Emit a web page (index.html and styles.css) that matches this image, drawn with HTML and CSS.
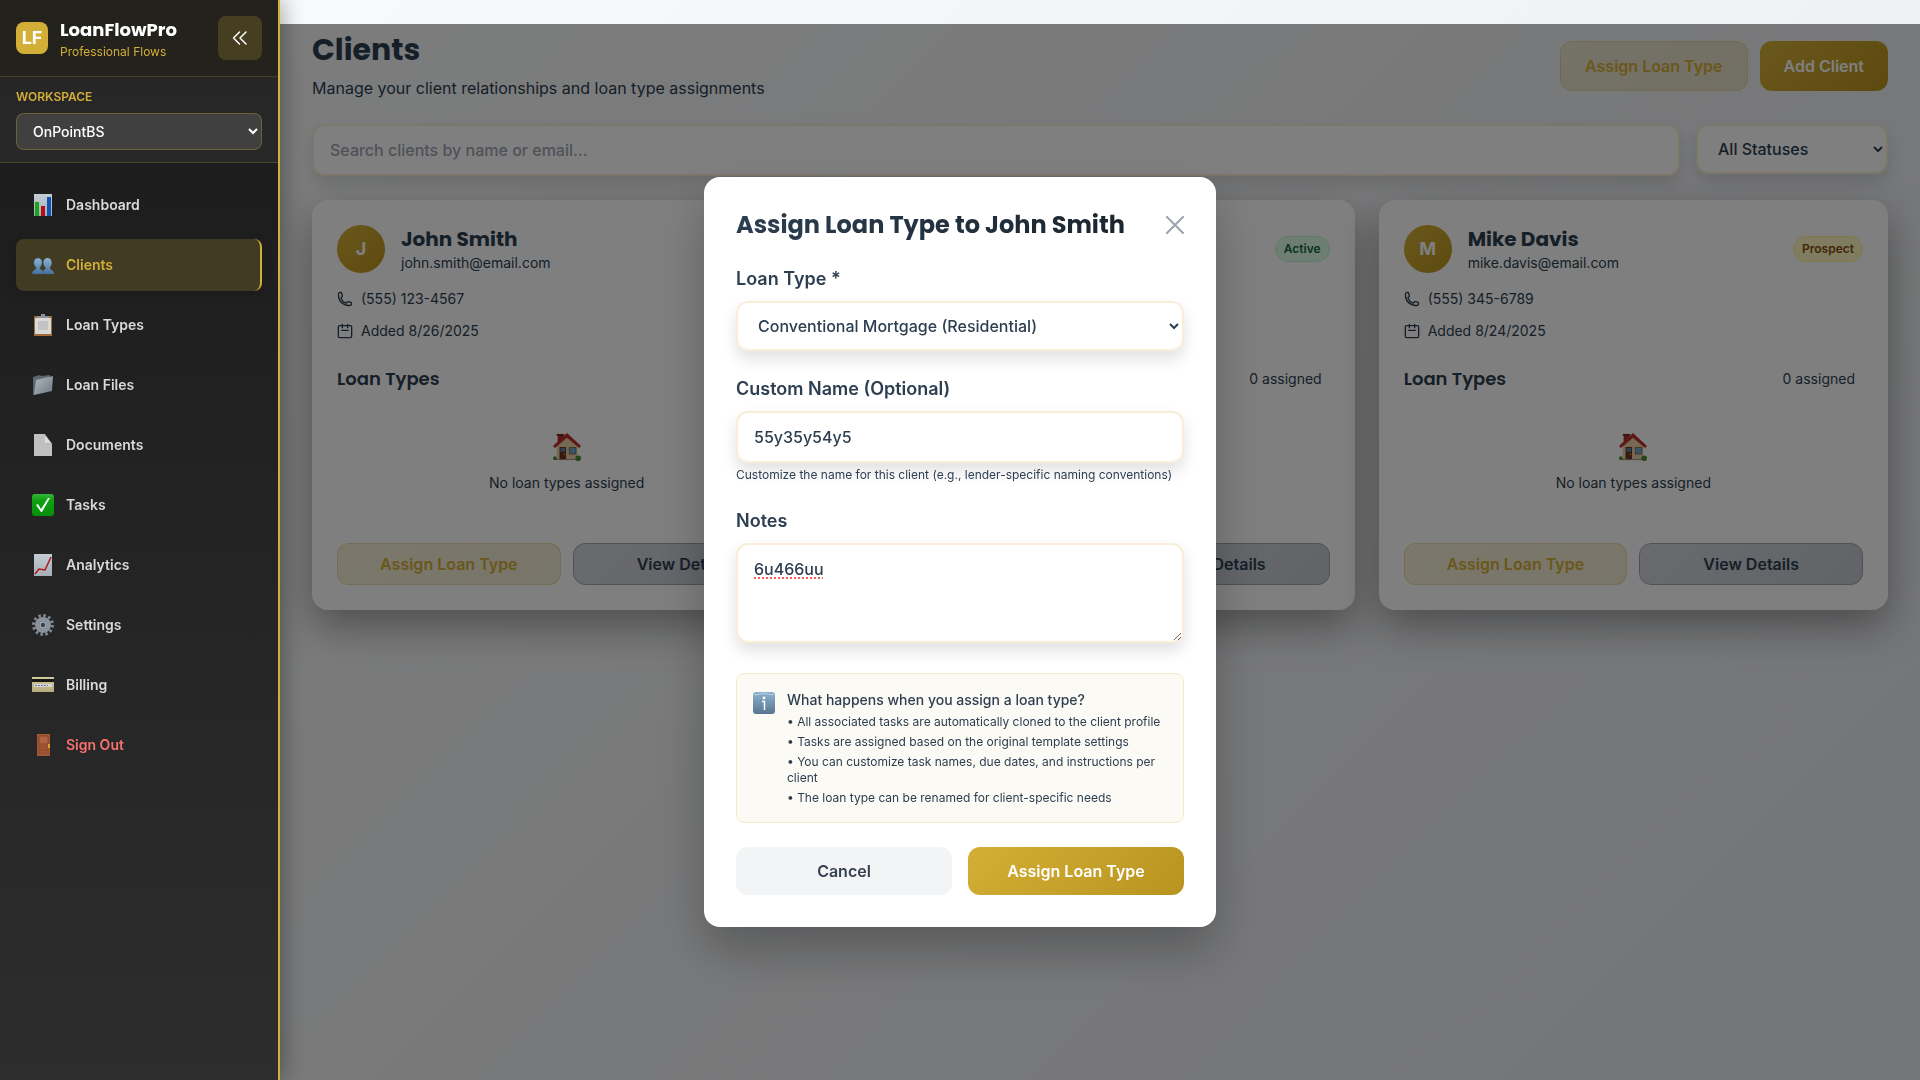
FILE: index.html
```html
<!DOCTYPE html>
<html lang="en">
<head>
<meta charset="utf-8">
<meta name="viewport" content="width=device-width, initial-scale=1">
<title>LoanFlowPro – Clients</title>
<link rel="stylesheet" href="styles.css">
</head>
<body>
<svg class="defs" aria-hidden="true">
  <defs>
    <linearGradient id="g-paper" x1="0" y1="0" x2="0" y2="1"><stop offset="0" stop-color="#c3ccd4"/><stop offset="1" stop-color="#a5afb7"/></linearGradient>
    <linearGradient id="g-green" x1="0" y1="0" x2="0" y2="1"><stop offset="0" stop-color="#35b83a"/><stop offset=".3" stop-color="#0d9f12"/><stop offset="1" stop-color="#078f0c"/></linearGradient>
    <linearGradient id="g-blue" x1="0" y1="0" x2="0" y2="1"><stop offset="0" stop-color="#8fb2cf"/><stop offset="1" stop-color="#587691"/></linearGradient>
    <linearGradient id="g-folder" x1="0" y1="0" x2="1" y2="1"><stop offset="0" stop-color="#b3bac1"/><stop offset="1" stop-color="#6f7881"/></linearGradient>
    <linearGradient id="g-user" x1="0" y1="0" x2="0" y2="1"><stop offset="0" stop-color="#8ab3d6"/><stop offset="1" stop-color="#48719a"/></linearGradient>
    <linearGradient id="g-card" x1="0" y1="0" x2="0" y2="1"><stop offset="0" stop-color="#d3caa0"/><stop offset="1" stop-color="#b5ab7c"/></linearGradient>
    <symbol id="house" viewBox="0 1 32 30">
      <path d="M3 28h26v2H3z" fill="#8d8474"/>
      <path d="M5 14 16 5l11 9v15H5z" fill="#ead3a8"/>
      <path d="M6 3h6v6l-6 5z" fill="#a9302a"/><path d="M5 2h8v2H5z" fill="#7a221e"/>
      <path d="M1 15 16 1l15 14-2 2L16 6 3 17z" fill="#b8302c"/>
      <path d="M8 16h7v13H8z" fill="#6d3520"/><path d="M9 17h5v4H9z" fill="#58809f"/><circle cx="13" cy="24" r=".8" fill="#e6b84a"/>
      <path d="M18 16h8v8h-8z" fill="#8b6b4c"/><path d="M19 17h6v6h-6z" fill="#71a9d8"/>
      <circle cx="3" cy="28" r="2" fill="#4a8f2e"/><circle cx="28" cy="28" r="3" fill="#4a8f2e"/>
    </symbol>
    <symbol id="phone" viewBox="0 0 24 24"><path fill="none" stroke="currentColor" stroke-width="2" stroke-linejoin="round" stroke-linecap="round" d="M2.250 6.750c0 8.284 6.716 15 15 15h2.250a2.250 2.250 0 0 0 2.250-2.250v-1.372c0-.516-.351-.966-.852-1.091l-4.423-1.106c-.44-.11-.902.055-1.173.417l-.97 1.293c-.282.376-.769.542-1.210.38a12.035 12.035 0 0 1-7.143-7.143c-.162-.441.004-.928.38-1.210l1.293-.97c.363-.271.527-.734.417-1.173L6.963 3.102a1.125 1.125 0 0 0-1.091-.852H4.500A2.250 2.250 0 0 0 2.250 4.500z"/></symbol>
    <symbol id="calendar" viewBox="0 0 24 24"><path fill="none" stroke="currentColor" stroke-width="2" stroke-linejoin="round" stroke-linecap="round" d="M8 2v5M16 2v5M7 11h10M4 4h16a2 2 0 0 1 2 2v14a2 2 0 0 1-2 2H4a2 2 0 0 1-2-2V6a2 2 0 0 1 2-2z"/></symbol>
  </defs>
</svg>

<div class="app">
  <aside class="sidebar">
    <header class="brand">
      <div class="brand-logo">LF</div>
      <div class="brand-text">
        <div class="brand-name">LoanFlowPro</div>
        <div class="brand-tag">Professional Flows</div>
      </div>
      <button class="collapse" type="button" aria-label="Collapse sidebar">
        <svg width="20" height="20" viewBox="0 0 20 20" fill="none" stroke="currentColor" stroke-width="1.500" stroke-linecap="round" stroke-linejoin="round"><path d="M9.500 4 3.500 10l6 6M16 4l-6 6 6 6"/></svg>
      </button>
    </header>
    <div class="workspace">
      <label for="workspace">WORKSPACE</label>
      <select id="workspace"><option>OnPointBS</option></select>
    </div>
    <nav class="nav">
      <a href="#"><svg viewBox="0 0 22 22"><path d="M2 0h18v22H2z" fill="url(#g-paper)"/><path d="M3 8h4v14H3z" fill="#14a51a"/><path d="M9 12h4v10H9z" fill="#b50d12"/><path d="M15 3h4v19h-4z" fill="#0d55b5"/></svg>Dashboard</a>
      <a href="#" class="active" aria-current="page"><svg viewBox="0 0 22 22"><path d="M10 20c0-3 2-4 3.500-5v-1.500C10 10 11 4 15.500 4S21 10 18 13.500V15c2 .7 4 2 4 5z" fill="url(#g-user)"/><path d="M0 20c0-3 2-4 4-5v-1.500C.5 10 1.500 4 6 4s5.500 6 2 9.500V15c2 .7 3.500 2 3.500 5z" fill="url(#g-user)" stroke="#375a78" stroke-width=".5"/></svg>Clients</a>
      <a href="#"><svg viewBox="0 0 22 22"><path d="M2 2h18v20H2z" fill="#a06b35"/><path d="M3 4h16v16H3z" fill="#d9d9d9"/><path d="M6 7h10v9H6z" fill="#c3c3c3"/><path d="M5 4V2h4V0h4v2h4v2z" fill="#8d9298"/></svg>Loan Types</a>
      <a href="#"><svg viewBox="0 0 22 22"><path d="M1 3 8 1l1 1 9-1v4L2 21H1z" fill="#5d676f"/><path d="M4 6 21 2l-1 15L2 21z" fill="url(#g-folder)"/></svg>Loan Files</a>
      <a href="#"><svg viewBox="0 0 22 22"><path d="M2 0h11l7 10v12H2z" fill="#c0c0c0"/><path d="M13 0l7 10-7-1z" fill="#555"/><path d="M13 1v8l7 1z" fill="#dedede"/></svg>Documents</a>
      <a href="#"><svg viewBox="0 0 22 22"><rect width="22" height="22" rx="3" fill="url(#g-green)"/><path d="m4 11 2-1 3 5 7-11h2L10 18H9z" fill="#f1f7f1"/></svg>Tasks</a>
      <a href="#"><svg viewBox="0 0 22 22"><path d="M2 0h18v22H2z" fill="url(#g-paper)"/><path d="m3 20 4-5 6 1 6-13" fill="none" stroke="#b1161b" stroke-width="1.500"/></svg>Analytics</a>
      <a href="#"><svg viewBox="0 0 22 22"><circle cx="11" cy="11" r="9.500" fill="none" stroke="#828a93" stroke-width="3" stroke-dasharray="2.500 2.480"/><circle cx="11" cy="11" r="6" fill="#555d66" stroke="#8b949d" stroke-width="4"/><circle cx="11" cy="11" r="3" fill="#3c4249" stroke="#a3abb3" stroke-width="1.500"/></svg>Settings</a>
      <a href="#"><svg viewBox="0 0 22 22"><path d="M0 3h22v15H0z" fill="url(#g-card)"/><path d="M0 5h22v3H0z" fill="#191711"/><path d="M2 10h18v3H2z" fill="#d8d9d5"/><path d="M3 11.500h13" stroke="#6274a8" stroke-dasharray="2 1"/></svg>Billing</a>
      <a href="#" class="signout"><svg viewBox="0 0 22 22"><path d="M5 0h13v22H5z" fill="#a35634"/><path d="M7 2h9v8H7zM7 13h9v2H7zM7 17h9v2H7z" fill="#b06440" stroke="#7c3e22" stroke-width=".7"/><path d="M16 10h2v4h-2z" fill="#d6a52f"/></svg>Sign Out</a>
    </nav>
  </aside>

  <main class="main">
    <header class="page-head">
      <div>
        <h1>Clients</h1>
        <p>Manage your client relationships and loan type assignments</p>
      </div>
      <div class="head-actions">
        <button type="button" class="btn btn-soft">Assign Loan Type</button>
        <button type="button" class="btn btn-gold">Add Client</button>
      </div>
    </header>

    <div class="filters">
      <input class="field" type="text" placeholder="Search clients by name or email..." aria-label="Search clients">
      <select class="field" aria-label="Status"><option>All Statuses</option></select>
    </div>

    <div class="cards">
      <article class="card">
        <header class="card-head">
          <div class="avatar">J</div>
          <div><h2>John Smith</h2><p>john.smith@email.com</p></div>
        </header>
        <div class="details">
          <div><svg><use href="#phone"/></svg>(555) 123-4567</div>
          <div><svg><use href="#calendar"/></svg>Added 8/26/2025</div>
        </div>
        <div class="types-head"><h3>Loan Types</h3></div>
        <div class="empty"><svg><use href="#house"/></svg>No loan types assigned</div>
        <div class="card-actions">
          <button type="button" class="btn btn-soft">Assign Loan Type</button>
          <button type="button" class="btn btn-grey">View Details</button>
        </div>
      </article>

      <article class="card">
        <header class="card-head"><span class="badge active">Active</span></header>
        <div class="details"></div>
        <div class="types-head"><span>0 assigned</span></div>
        <div class="card-actions">
          <button type="button" class="btn btn-soft">Assign Loan Type</button>
          <button type="button" class="btn btn-grey">View Details</button>
        </div>
      </article>

      <article class="card">
        <header class="card-head">
          <div class="avatar">M</div>
          <div><h2>Mike Davis</h2><p>mike.davis@email.com</p></div>
          <span class="badge prospect">Prospect</span>
        </header>
        <div class="details">
          <div><svg><use href="#phone"/></svg>(555) 345-6789</div>
          <div><svg><use href="#calendar"/></svg>Added 8/24/2025</div>
        </div>
        <div class="types-head"><h3>Loan Types</h3><span>0 assigned</span></div>
        <div class="empty"><svg><use href="#house"/></svg>No loan types assigned</div>
        <div class="card-actions">
          <button type="button" class="btn btn-soft">Assign Loan Type</button>
          <button type="button" class="btn btn-grey">View Details</button>
        </div>
      </article>
    </div>
  </main>
</div>

<div class="overlay">
  <form class="dialog" role="dialog" aria-modal="true" aria-labelledby="dialog-title">
    <header class="dialog-head">
      <h2 id="dialog-title">Assign Loan Type to John Smith</h2>
      <button type="button" class="close" aria-label="Close"><svg width="18" height="18" viewBox="0 0 18 18" fill="none" stroke="currentColor" stroke-width="2" stroke-linecap="round"><path d="m1 1 16 16M17 1 1 17"/></svg></button>
    </header>
    <div class="group">
      <label for="loan-type">Loan Type *</label>
      <select class="field" id="loan-type"><option>Conventional Mortgage (Residential)</option></select>
    </div>
    <div class="group">
      <label for="custom-name">Custom Name (Optional)</label>
      <input class="field" id="custom-name" type="text" value="55y35y54y5">
      <p class="hint">Customize the name for this client (e.g., lender-specific naming conventions)</p>
    </div>
    <div class="group notes">
      <label for="notes">Notes</label>
      <textarea class="field" id="notes" spellcheck="false">6u466uu</textarea>
    </div>
    <section class="info">
      <svg viewBox="0 0 22 22"><rect width="22" height="22" rx="3" fill="url(#g-blue)"/><path d="M1 3q10-3 20 0" fill="none" stroke="#b9d0e3"/><circle cx="11" cy="6" r="1.400" fill="#fff"/><path d="M9 9.500h2.500V18" fill="none" stroke="#fff" stroke-width="1.500"/></svg>
      <div>
        <h3>What happens when you assign a loan type?</h3>
        <ul>
          <li>• All associated tasks are automatically cloned to the client profile</li>
          <li>• Tasks are assigned based on the original template settings</li>
          <li>• You can customize task names, due dates, and instructions per client</li>
          <li>• The loan type can be renamed for client-specific needs</li>
        </ul>
      </div>
    </section>
    <footer class="dialog-actions">
      <button type="button" class="btn btn-cancel">Cancel</button>
      <button type="submit" class="btn btn-gold">Assign Loan Type</button>
    </footer>
  </form>
</div>
</body>
</html>
```

FILE: styles.css
```css
:root {
  --gold: #d4af37;
  --gold-dark: #b8941f;
  --ink: #2c3e50;
  --heading: "Poppins", "Inter", sans-serif;
}
* { box-sizing: border-box; margin: 0; }
body {
  min-height: 100vh;
  font: 400 14px/20px "Inter", sans-serif;
  color: var(--ink);
  background: linear-gradient(135deg, #fafbfc, #e9ebee);
}
button, input, select, textarea { font: inherit; color: inherit; }
button { border: 0; cursor: pointer; }
.defs { position: absolute; width: 0; height: 0; }
.app { display: flex; min-height: 100vh; }

/* Sidebar */
.sidebar {
  position: relative;
  z-index: 20;
  flex: 0 0 280px;
  background: linear-gradient(#1a1a1a, #2d2d2d);
  border-right: 2px solid var(--gold);
  box-shadow: 4px 0 20px rgba(0, 0, 0, .3);
  color: #fff;
}
.brand {
  display: flex;
  align-items: center;
  gap: 12px;
  padding: 16px;
  background: rgba(212, 175, 55, .05);
  border-bottom: 1px solid rgba(212, 175, 55, .2);
}
.brand-logo {
  width: 32px;
  height: 32px;
  border-radius: 8px;
  background: var(--gold);
  font: 700 18px/32px "Inter", sans-serif;
  text-align: center;
}
.brand-name { font: 700 18px/28px var(--heading); }
.brand-tag { font-size: 12px; line-height: 16px; color: var(--gold); }
.collapse {
  display: grid;
  place-items: center;
  width: 44px;
  height: 44px;
  margin-left: auto;
  border-radius: 8px;
  background: rgba(212, 175, 55, .2);
}
.workspace {
  display: flex;
  flex-direction: column;
  gap: 8px;
  padding: 12px 16px;
  background: rgba(255, 255, 255, .05);
  border-bottom: 1px solid rgba(212, 175, 55, .2);
}
.workspace label { font-size: 12px; line-height: 16px; font-weight: 600; color: var(--gold); }
.workspace select {
  height: 37px;
  padding: 0 12px;
  border: 1px solid rgba(212, 175, 55, .3);
  border-radius: 8px;
  background: #404040;
  font-weight: 500;
}
.nav { display: flex; flex-direction: column; gap: 8px; padding: 16px; }
.nav a {
  display: flex;
  align-items: center;
  gap: 12px;
  height: 52px;
  padding: 0 16px;
  border-radius: 8px;
  color: #d9d9d9;
  font-weight: 600;
  text-decoration: none;
}
.nav svg { width: 22px; height: 22px; }
.nav .active {
  background: rgba(212, 175, 55, .2);
  border-right: 2px solid var(--gold);
  box-shadow: 0 4px 12px rgba(0, 0, 0, .15);
  color: var(--gold);
}
.nav .signout { color: #f87171; }

/* Page */
.main { flex: 1; min-width: 0; padding: 32px; }
.page-head {
  display: flex;
  justify-content: space-between;
  align-items: center;
  margin-bottom: 24px;
}
h1 { margin-bottom: 8px; font: 700 30px/36px var(--heading); }
.page-head p { font-size: 16px; line-height: 24px; }
.head-actions { display: flex; gap: 12px; }
.head-actions .btn { height: 50px; padding: 0 24px; }

.btn {
  border-radius: 12px;
  font-size: 16px;
  line-height: 24px;
  font-weight: 600;
}
.btn-soft {
  border: 1px solid rgba(212, 175, 55, .3);
  background: linear-gradient(135deg, rgba(212, 175, 55, .2), rgba(184, 148, 31, .2));
  color: var(--gold);
}
.btn-gold { background: linear-gradient(135deg, var(--gold), var(--gold-dark)); color: #fff; }
.btn-grey {
  border: 1px solid #9ca3af;
  background: linear-gradient(135deg, #d1d5db, #c3c8cf);
}
.btn-cancel { background: #f3f4f6; color: #374151; }

.field {
  width: 100%;
  height: 52px;
  padding: 0 16px;
  border: 2px solid #f9eed6;
  border-radius: 12px;
  background: #fff;
  box-shadow: 0 8px 16px rgba(0, 0, 0, .12);
  font-size: 16px;
  line-height: 24px;
  font-weight: 500;
}
select.field { height: 50px; }
.field::placeholder { color: #9ca3af; opacity: 1; }

.filters { display: flex; gap: 16px; margin-bottom: 24px; }
.filters select { flex: 0 0 192px; }

.cards { display: grid; grid-template-columns: repeat(3, minmax(0, 1fr)); gap: 24px; }
.card {
  display: flex;
  flex-direction: column;
  padding: 25px;
  border-radius: 16px;
  background: #fff;
  box-shadow: 0 16px 40px rgba(0, 0, 0, .36);
}
.card-head { display: flex; align-items: center; gap: 16px; min-height: 48px; margin-bottom: 16px; }
.avatar {
  width: 48px;
  height: 48px;
  border-radius: 50%;
  background: linear-gradient(135deg, var(--gold), var(--gold-dark));
  color: #fff;
  font: 700 18px/48px "Inter", sans-serif;
  text-align: center;
}
.card h2 { font: 700 20px/28px var(--heading); }
.card h3 { font: 600 18px/28px var(--heading); }
.badge {
  margin-left: auto;
  padding: 4px 8px;
  border: 1px solid;
  border-radius: 13px;
  font-size: 12px;
  line-height: 16px;
  font-weight: 600;
}
.badge.active { background: #dcfce7; border-color: #bbf7d0; color: #166534; }
.badge.prospect { background: #fef9c3; border-color: #fef08a; color: #854d0e; }
.details { display: flex; flex-direction: column; gap: 12px; min-height: 52px; margin-bottom: 24px; }
.details div { display: flex; align-items: center; gap: 8px; }
.details svg { width: 16px; height: 16px; }
.types-head { display: flex; align-items: center; justify-content: space-between; min-height: 28px; }
.types-head span { margin-left: auto; padding: 0 8px; }
.empty {
  display: flex;
  flex-direction: column;
  align-items: center;
  gap: 12px;
  padding: 40px 0 24px;
}
.empty svg { width: 30px; height: 28px; }
.card-actions { display: flex; gap: 12px; margin-top: auto; }
.empty + .card-actions { padding-top: 26px; }
.card-actions .btn { flex: 1; height: 42px; }

/* Dialog */
.overlay {
  position: fixed;
  inset: 24px 0 0;
  z-index: 10;
  display: flex;
  align-items: center;
  justify-content: center;
  background: rgba(0, 0, 0, .5);
}
.dialog {
  width: 512px;
  padding: 32px;
  border-radius: 16px;
  background: #fff;
  box-shadow: 0 24px 48px rgba(0, 0, 0, .25);
}
.dialog-head { display: flex; align-items: center; justify-content: space-between; margin-bottom: 24px; }
.dialog-head h2 {
  font: 700 24px/32px var(--heading);
  background: linear-gradient(90deg, var(--ink), #1a252f);
  background-clip: text;
  color: transparent;
}
.close { display: flex; padding: 0; background: none; color: #9ca3af; }
.group { display: flex; flex-direction: column; margin-bottom: 24px; }
.group label { margin-bottom: 8px; font-size: 18px; line-height: 28px; font-weight: 600; }
.hint { margin-top: 4px; font-size: 12px; line-height: 16px; }
.group.notes { margin-bottom: 30px; }
textarea.field {
  height: 100px;
  padding: 12px 16px;
  resize: vertical;
  text-decoration: underline dotted #ff5b52 2px;
  text-underline-offset: 2px;
}
.info {
  display: flex;
  align-items: flex-start;
  gap: 12px;
  margin-bottom: 24px;
  padding: 16px;
  border: 1px solid #f6ebc8;
  border-radius: 8px;
  background: #fcfaf4;
}
.info svg { flex: 0 0 22px; height: 22px; margin-top: 2px; }
.info h3 { margin-bottom: 4px; font-size: 14px; line-height: 20px; font-weight: 500; }
.info ul { display: flex; flex-direction: column; gap: 4px; padding: 0; list-style: none; font-size: 12px; line-height: 16px; }
.dialog-actions { display: flex; gap: 16px; }
.dialog-actions .btn { flex: 1; height: 48px; }
```
